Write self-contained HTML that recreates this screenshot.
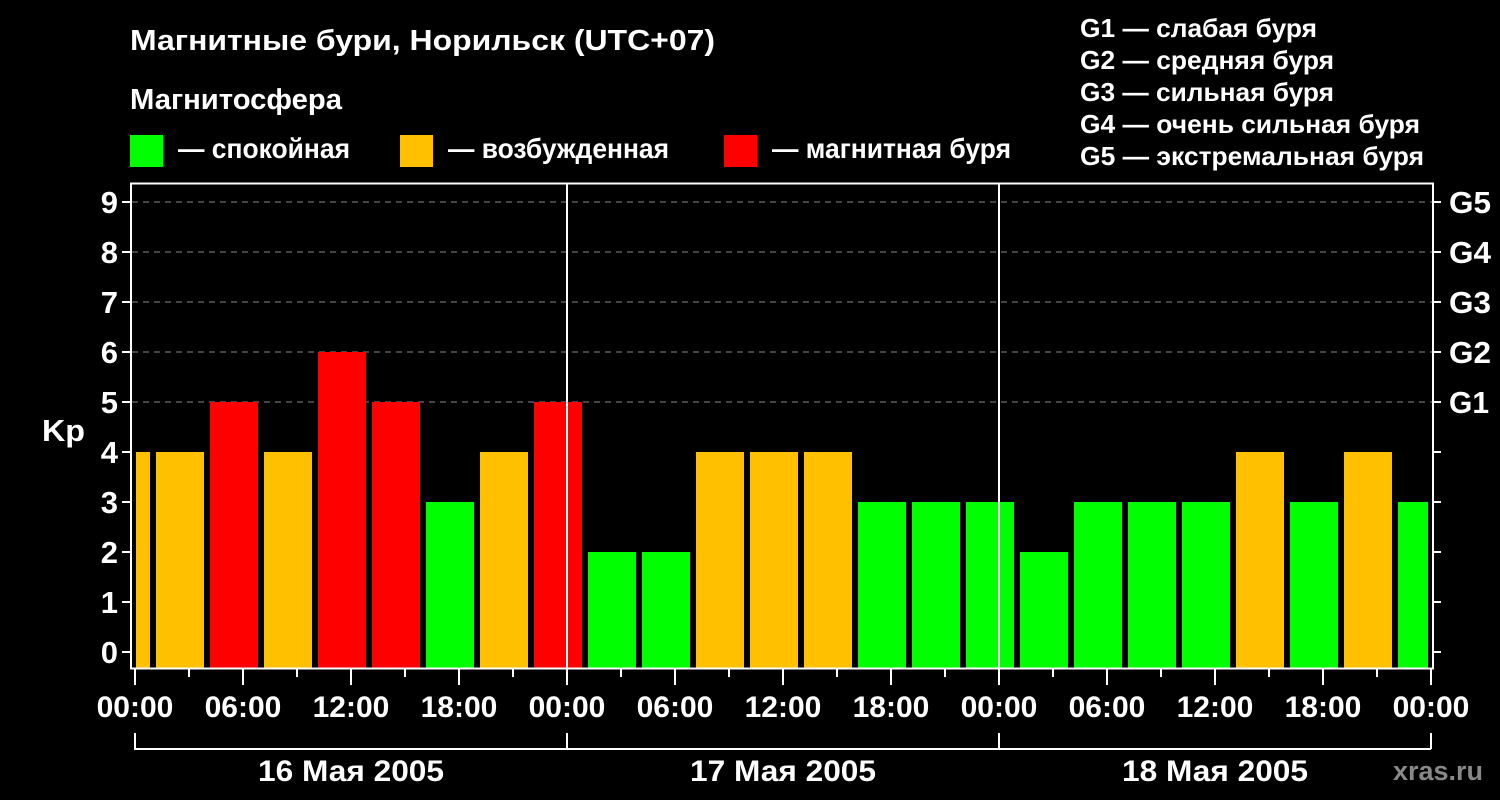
<!DOCTYPE html>
<html><head><meta charset="utf-8"><style>
html,body{margin:0;padding:0;background:#000;width:1500px;height:800px;overflow:hidden}
svg{display:block}
text{font-family:"Liberation Sans",Arial,sans-serif;font-weight:bold;fill:#fff}
</style></head><body>
<svg width="1500" height="800" xmlns="http://www.w3.org/2000/svg">
<rect width="1500" height="800" fill="#000"/>
<text x="130" y="50" font-size="29" textLength="585" lengthAdjust="spacingAndGlyphs">Магнитные бури, Норильск (UTC+07)</text>
<text x="130" y="109" font-size="29" textLength="212" lengthAdjust="spacingAndGlyphs">Магнитосфера</text>
<rect x="130" y="135" width="33" height="32" fill="#00ff00"/>
<text x="178" y="158" font-size="28" textLength="172" lengthAdjust="spacingAndGlyphs">— спокойная</text>
<rect x="400" y="135" width="33" height="32" fill="#ffc000"/>
<text x="448" y="158" font-size="28" textLength="221" lengthAdjust="spacingAndGlyphs">— возбужденная</text>
<rect x="724" y="135" width="33" height="32" fill="#ff0000"/>
<text x="772" y="158" font-size="28" textLength="239" lengthAdjust="spacingAndGlyphs">— магнитная буря</text>
<g font-size="26">
<text x="1080" y="37" textLength="237" lengthAdjust="spacingAndGlyphs">G1 — слабая буря</text>
<text x="1080" y="69" textLength="254" lengthAdjust="spacingAndGlyphs">G2 — средняя буря</text>
<text x="1080" y="101" textLength="254" lengthAdjust="spacingAndGlyphs">G3 — сильная буря</text>
<text x="1080" y="133" textLength="340" lengthAdjust="spacingAndGlyphs">G4 — очень сильная буря</text>
<text x="1080" y="165" textLength="344" lengthAdjust="spacingAndGlyphs">G5 — экстремальная буря</text>
</g>
<g stroke="#888" stroke-width="1" stroke-dasharray="6,5">
<line x1="132" y1="202" x2="1432" y2="202"/>
<line x1="132" y1="252" x2="1432" y2="252"/>
<line x1="132" y1="302" x2="1432" y2="302"/>
<line x1="132" y1="352" x2="1432" y2="352"/>
<line x1="132" y1="402" x2="1432" y2="402"/>
</g>
<g>
<rect x="136" y="452" width="14" height="216" fill="#ffc000"/>
<rect x="156" y="452" width="48" height="216" fill="#ffc000"/>
<rect x="210" y="402" width="48" height="266" fill="#ff0000"/>
<rect x="264" y="452" width="48" height="216" fill="#ffc000"/>
<rect x="318" y="352" width="48" height="316" fill="#ff0000"/>
<rect x="372" y="402" width="48" height="266" fill="#ff0000"/>
<rect x="426" y="502" width="48" height="166" fill="#00ff00"/>
<rect x="480" y="452" width="48" height="216" fill="#ffc000"/>
<rect x="534" y="402" width="48" height="266" fill="#ff0000"/>
<rect x="588" y="552" width="48" height="116" fill="#00ff00"/>
<rect x="642" y="552" width="48" height="116" fill="#00ff00"/>
<rect x="696" y="452" width="48" height="216" fill="#ffc000"/>
<rect x="750" y="452" width="48" height="216" fill="#ffc000"/>
<rect x="804" y="452" width="48" height="216" fill="#ffc000"/>
<rect x="858" y="502" width="48" height="166" fill="#00ff00"/>
<rect x="912" y="502" width="48" height="166" fill="#00ff00"/>
<rect x="966" y="502" width="48" height="166" fill="#00ff00"/>
<rect x="1020" y="552" width="48" height="116" fill="#00ff00"/>
<rect x="1074" y="502" width="48" height="166" fill="#00ff00"/>
<rect x="1128" y="502" width="48" height="166" fill="#00ff00"/>
<rect x="1182" y="502" width="48" height="166" fill="#00ff00"/>
<rect x="1236" y="452" width="48" height="216" fill="#ffc000"/>
<rect x="1290" y="502" width="48" height="166" fill="#00ff00"/>
<rect x="1344" y="452" width="48" height="216" fill="#ffc000"/>
<rect x="1398" y="502" width="30" height="166" fill="#00ff00"/>
</g>
<g stroke="#fff" stroke-width="2">
<line x1="567" y1="183" x2="567" y2="668"/>
<line x1="999" y1="183" x2="999" y2="668"/>
</g>
<rect x="131" y="183.5" width="1302" height="485" fill="none" stroke="#fff" stroke-width="2"/>
<g stroke="#fff" stroke-width="2">
<path d="M122 202H131M122 252H131M122 302H131M122 352H131M122 402H131M122 452H131M122 502H131M122 552H131M122 602H131M122 652H131"/>
<path d="M1433 202H1441M1433 252H1441M1433 302H1441M1433 352H1441M1433 402H1441M1433 452H1441M1433 502H1441M1433 552H1441M1433 602H1441M1433 652H1441"/>
<path d="M189 669V677M297 669V677M405 669V677M513 669V677M621 669V677M729 669V677M837 669V677M945 669V677M1053 669V677M1161 669V677M1269 669V677M1377 669V677"/>
<path d="M135 669V685M243 669V685M351 669V685M459 669V685M567 669V685M675 669V685M783 669V685M891 669V685M999 669V685M1107 669V685M1215 669V685M1323 669V685M1431 669V685"/>
<path d="M135 733V749H1431M567 733V749M999 733V749M1431 733V749" fill="none"/>
</g>
<g font-size="31" text-anchor="end">
<text x="118" y="213">9</text><text x="118" y="263">8</text><text x="118" y="313">7</text>
<text x="118" y="363">6</text><text x="118" y="413">5</text><text x="118" y="463">4</text>
<text x="118" y="513">3</text><text x="118" y="563">2</text><text x="118" y="613">1</text>
<text x="118" y="663">0</text>
</g>
<text x="42" y="441" font-size="31" textLength="43" lengthAdjust="spacingAndGlyphs">Kp</text>
<g font-size="31">
<text x="1449" y="213" textLength="42" lengthAdjust="spacingAndGlyphs">G5</text><text x="1449" y="263" textLength="42" lengthAdjust="spacingAndGlyphs">G4</text><text x="1449" y="313" textLength="42" lengthAdjust="spacingAndGlyphs">G3</text>
<text x="1449" y="363" textLength="42" lengthAdjust="spacingAndGlyphs">G2</text><text x="1449" y="413" textLength="40" lengthAdjust="spacingAndGlyphs">G1</text>
</g>
<g font-size="30" text-anchor="middle">
<text x="135" y="717">00:00</text><text x="243" y="717">06:00</text><text x="351" y="717">12:00</text>
<text x="459" y="717">18:00</text><text x="567" y="717">00:00</text><text x="675" y="717">06:00</text>
<text x="783" y="717">12:00</text><text x="891" y="717">18:00</text><text x="999" y="717">00:00</text>
<text x="1107" y="717">06:00</text><text x="1215" y="717">12:00</text><text x="1323" y="717">18:00</text>
<text x="1431" y="717">00:00</text>
</g>
<g font-size="30">
<text x="258" y="781" textLength="186" lengthAdjust="spacingAndGlyphs">16 Мая 2005</text>
<text x="690" y="781" textLength="186" lengthAdjust="spacingAndGlyphs">17 Мая 2005</text>
<text x="1122" y="781" textLength="186" lengthAdjust="spacingAndGlyphs">18 Мая 2005</text>
</g>
<text x="1393" y="780" font-size="27" style="fill:#888" textLength="90" lengthAdjust="spacingAndGlyphs">xras.ru</text>
</svg>
</body></html>
